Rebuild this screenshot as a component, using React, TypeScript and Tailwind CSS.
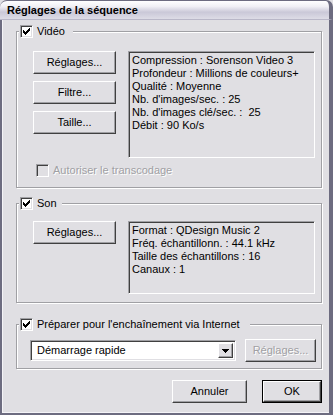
import React from "react";

const Check = ({ checked, disabled }: { checked?: boolean; disabled?: boolean }) => (
  <span
    className={`w-[13px] h-[13px] shrink-0 flex items-center justify-center border border-t-[#a0a0a4] border-l-[#a0a0a4] border-r-white border-b-white shadow-[inset_1px_1px_0_#404040,inset_-1px_-1px_0_#e0dfe3] ${
      disabled ? "bg-[#e0dfe3]" : "bg-white"
    }`}
  >
    {checked && (
      <svg width="7" height="7" viewBox="0 0 7 7" shapeRendering="crispEdges">
        <path
          d="M6 0h1v3h-1v1h-1v1h-1v1h-1v1h-1v-1h-1v-1h-1v-3h1v1h1v1h1v-1h1v-1h1z"
          fill="#000"
        />
      </svg>
    )}
  </span>
);

const Btn = ({
  children,
  className = "",
  disabled,
}: {
  children: React.ReactNode;
  className?: string;
  disabled?: boolean;
}) => (
  <div
    className={`h-[23px] flex items-center justify-center border border-t-white border-l-white border-r-[#404040] border-b-[#404040] shadow-[inset_-1px_-1px_0_#a0a0a4] ${
      disabled ? "text-[#a0a0a4] [text-shadow:1px_1px_0_#fff]" : ""
    } ${className}`}
  >
    {children}
  </div>
);

const Group = ({
  label,
  checked,
  className = "",
  legendPad = "pr-[8px]",
  children,
}: {
  label: string;
  checked?: boolean;
  className?: string;
  legendPad?: string;
  children: React.ReactNode;
}) => (
  <fieldset
    className={`w-[306px] ml-[13px] border border-[#a0a0a4] shadow-[1px_1px_0_#fff,inset_1px_1px_0_#fff] ${className}`}
  >
    <legend className={`ml-[2px] pl-px ${legendPad} h-[13px] flex items-center gap-[4px] leading-[13px] bg-[#e0dfe3]`}>
      <Check checked={checked} />
      <span>{label}</span>
    </legend>
    {children}
  </fieldset>
);

const InfoBox = ({ lines, className = "" }: { lines: string[]; className?: string }) => (
  <div
    className={`border border-t-[#a0a0a4] border-l-[#a0a0a4] border-r-white border-b-white shadow-[inset_1px_1px_0_#404040,inset_-1px_-1px_0_#e0dfe3] pl-[3px] pt-[2px] leading-[13px] ${className}`}
  >
    {lines.map((l) => (
      <div key={l} className="whitespace-pre">
        {l}
      </div>
    ))}
  </div>
);

export default function App() {
  return (
    <div className="w-[333px] h-[415px] flex flex-col bg-[#e0dfe3] text-[11px] text-black font-['Liberation_Sans',Arial,sans-serif] overflow-hidden">
      <div className="h-[20px] shrink-0 flex items-center pl-[7px] rounded-t-[7px] border-t border-r-[4px] border-[#6d6c80] border-b border-b-[#b9b7c8] bg-[linear-gradient(to_bottom,#ffffff_0%,#f1f0f5_30%,#cac8d8_62%,#dddce6_100%)]">
        <span className="font-bold text-[11px]">Réglages de la séquence</span>
      </div>
      <div className="flex-1 border-l-2 border-r-[4px] border-b-2 border-[#6d6c80]">
        <div className="h-full border-l border-b border-[#f4f3f7] flex flex-col">
          <Group label="Vidéo" checked className="mt-[5px]" legendPad="pr-[8px]">
            <div className="pt-[13px] pl-[16px] pb-[10px]">
              <div className="flex gap-[12px]">
                <div className="flex flex-col gap-[7px] w-[83px]">
                  <Btn>Réglages...</Btn>
                  <Btn>Filtre...</Btn>
                  <Btn>Taille...</Btn>
                </div>
                <InfoBox
                  className="w-[187px] h-[107px]"
                  lines={[
                    "Compression : Sorenson Video 3",
                    "Profondeur : Millions de couleurs+",
                    "Qualité : Moyenne",
                    "Nb. d'images/sec. : 25",
                    "Nb. d'images clé/sec. :  25",
                    "Débit : 90 Ko/s",
                  ]}
                />
              </div>
              <div className="flex items-center gap-[4px] mt-[6px] ml-[3px] h-[13px]">
                <Check disabled />
                <span className="text-[#a0a0a4] [text-shadow:1px_1px_0_#fff]">Autoriser le transcodage</span>
              </div>
            </div>
          </Group>

          <Group label="Son" checked className="mt-[9px]" legendPad="pr-[5px]">
            <div className="pt-[11px] pl-[16px] pb-[8px] flex gap-[12px] items-start">
              <Btn className="w-[83px]">Réglages...</Btn>
              <InfoBox
                className="w-[187px] h-[73px]"
                lines={[
                  "Format : QDesign Music 2",
                  "Fréq. échantillonn. : 44.1 kHz",
                  "Taille des échantillons : 16",
                  "Canaux : 1",
                ]}
              />
            </div>
          </Group>

          <Group label="Préparer pour l'enchaînement via Internet" checked className="mt-[15px]" legendPad="pr-[10px]">
            <div className="pt-[8px] pl-[13px] pb-[6px] flex items-center gap-[9px]">
              <div className="w-[206px] h-[21px] flex items-center bg-white border border-t-[#a0a0a4] border-l-[#a0a0a4] border-r-white border-b-white shadow-[inset_1px_1px_0_#404040,inset_-1px_-1px_0_#e0dfe3] p-[2px]">
                <span className="flex-1 pl-[4px]">Démarrage rapide</span>
                <div className="w-[15px] h-full bg-[#e0dfe3] flex items-center justify-center border border-t-white border-l-white border-r-[#404040] border-b-[#404040] shadow-[inset_-1px_-1px_0_#a0a0a4]">
                  <svg width="7" height="4" viewBox="0 0 7 4" shapeRendering="crispEdges">
                    <path d="M0 0h7v1h-1v1h-1v1h-1v1h-1v-1h-1v-1h-1v-1h-1z" fill="#000" />
                  </svg>
                </div>
              </div>
              <Btn disabled className="w-[71px]">
                Réglages...
              </Btn>
            </div>
          </Group>

          <div className="mt-[11px] pr-[7px] flex justify-end gap-[15px]">
            <Btn className="w-[75px]">Annuler</Btn>
            <div className="w-[60px] h-[23px] border border-black flex">
              <Btn className="flex-1 h-full">OK</Btn>
            </div>
          </div>
        </div>
      </div>
    </div>
  );
}
